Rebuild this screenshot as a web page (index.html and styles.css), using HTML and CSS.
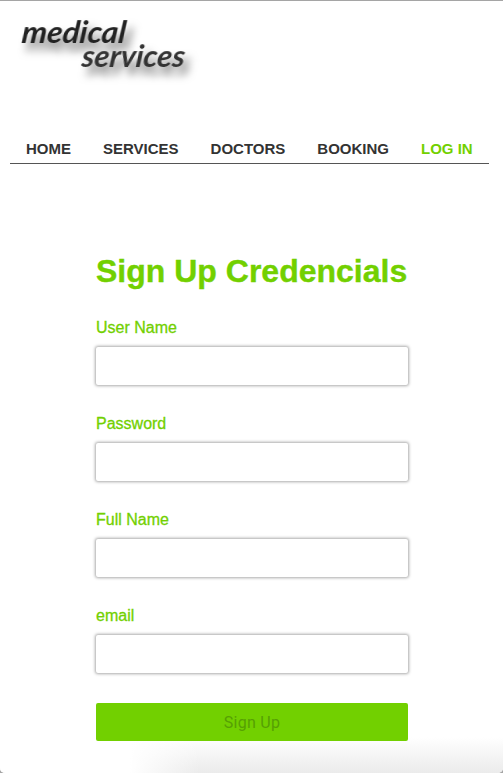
FILE: index.html
```
<!DOCTYPE html>
<html lang="en">
<head>
<meta charset="utf-8">
<title>Medical Services</title>
<link rel="stylesheet" href="styles.css">
</head>
<body>
<header>
  <svg class="logo" width="210" height="100" viewBox="0 0 210 100" role="img" aria-label="medical services">
    <text class="word word-top" transform="translate(21 43) skewX(-6)" textLength="104" lengthAdjust="spacingAndGlyphs">medical</text>
    <text class="word word-bottom" transform="translate(81 67) skewX(-6)" textLength="103" lengthAdjust="spacingAndGlyphs">services</text>
  </svg>
  <nav class="nav">
    <a>HOME</a><a>SERVICES</a><a>DOCTORS</a><a>BOOKING</a><a class="active">LOG IN</a>
  </nav>
</header>
<main>
  <form class="form">
    <h1>Sign Up Credencials</h1>
    <label>User Name<input type="text"></label>
    <label>Password<input type="password"></label>
    <label>Full Name<input type="text"></label>
    <label>email<input type="text"></label>
    <button type="button" disabled>Sign Up</button>
  </form>
</main>
</body>
</html>
```
FILE: styles.css
```
* { box-sizing: border-box; }
html { height: 100%; background: #a5a5a5; overflow: hidden; }
body {
  margin: 0;
  height: 773px;
  border-top: 1px solid #a5a5a5;
  border-radius: 0 0 5px 5px;
  background:
    linear-gradient(to right, #fff 130px, transparent 200px) no-repeat 0 100% / 100% 36px,
    linear-gradient(to bottom, #fff, #ebebeb) no-repeat 0 100% / 100% 36px,
    #fff;
  font-family: "Liberation Sans", Arial, sans-serif;
  color: #333;
}
.logo { display: block; margin-top: -1px; }
.word {
  font-family: Lato, sans-serif;
  font-style: italic;
  font-weight: 700;
  font-size: 31px;
  filter: drop-shadow(6px 8px 4px rgba(0, 0, 0, .55));
}
.word-top { fill: #222; }
.word-bottom { fill: #333; }
.nav {
  display: flex;
  height: 64px;
  margin: 0 14px 0 10px;
  padding-top: 40px;
  border-bottom: 1px solid #555;
  font-size: 15px;
  line-height: 17px;
  font-weight: 700;
}
.nav a { padding: 0 16px; white-space: nowrap; }
.nav .active { color: #72d000; }
.form {
  display: flex;
  flex-direction: column;
  width: 312px;
  margin: 88px 0 0 96px;
  color: #72d000;
}
h1 {
  margin: 0 0 29px;
  font-size: 32px;
  line-height: 38px;
  white-space: nowrap;
  -webkit-text-stroke: .4px #72d000;
}
label {
  display: flex;
  flex-direction: column;
  gap: 10px;
  height: 96px;
  font-size: 16px;
  line-height: 18px;
  -webkit-text-stroke: .3px #72d000;
}
input {
  height: 38px;
  border: 0;
  border-radius: 2px;
  background: #fff;
  box-shadow: 0 0 3px 1px #aaa;
}
button {
  height: 38px;
  border: 0;
  border-radius: 2px;
  background: #72d000;
  color: #56a004;
  font: 16px/38px Roboto, sans-serif;
  letter-spacing: .3px;
}
```
